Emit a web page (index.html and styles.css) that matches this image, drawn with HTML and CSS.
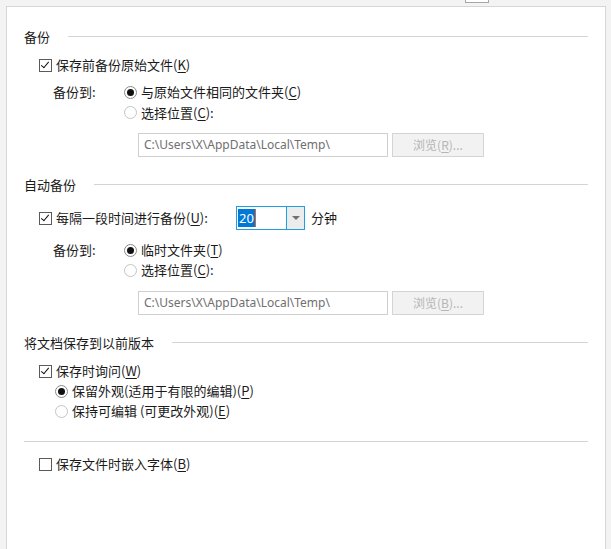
FILE: index.html
```html
<!DOCTYPE html>
<html lang="zh-CN">
<head>
<meta charset="utf-8">
<title>保存选项</title>
<link rel="stylesheet" href="styles.css">
</head>
<body>
<div class="topbar"><div class="tabstub"></div></div>
<div class="panel">
  <div class="group-title"><span>备份</span><div class="rule"></div></div>
  <div class="row cbrow gap8"><span class="cb checked"></span><span>保存前备份原始文件(<u>K</u>)</span></div>
  <div class="target gap7">
    <div class="tlabel">备份到:</div>
    <div class="opts">
      <div class="row"><span class="rb on"></span><span>与原始文件相同的文件夹(<u>C</u>)</span></div>
      <div class="row r21"><span class="rb"></span><span>选择位置(<u>C</u>):</span></div>
    </div>
  </div>
  <div class="pathrow gap10">
    <div class="path">C:\Users\X\AppData\Local\Temp\</div>
    <div class="browse">浏览(<u>R</u>)...</div>
  </div>

  <div class="group-title gap18"><span>自动备份</span><div class="rule"></div></div>
  <div class="row cbrow combo-row gap11">
    <span class="cb checked"></span><span class="cblabel">每隔一段时间进行备份(<u>U</u>):</span>
    <div class="combo"><div class="cval"><span class="sel">20</span><span class="caret"></span></div><div class="cbtn"><svg width="8" height="4" viewBox="0 0 8 4"><path d="M0 0H8L4 4Z" fill="#707070"/></svg></div></div>
    <span class="unit">分钟</span>
  </div>
  <div class="target gap10">
    <div class="tlabel">备份到:</div>
    <div class="opts">
      <div class="row"><span class="rb on"></span><span>临时文件夹(<u>T</u>)</span></div>
      <div class="row"><span class="rb"></span><span>选择位置(<u>C</u>):</span></div>
    </div>
  </div>
  <div class="pathrow gap11">
    <div class="path">C:\Users\X\AppData\Local\Temp\</div>
    <div class="browse">浏览(<u>B</u>)...</div>
  </div>

  <div class="group-title gap18"><span>将文档保存到以前版本</span><div class="rule"></div></div>
  <div class="row cbrow gap8"><span class="cb checked"></span><span>保存时询问(<u>W</u>)</span></div>
  <div class="row sub"><span class="rb on"></span><span>保留外观(适用于有限的编辑)(<u>P</u>)</span></div>
  <div class="row sub"><span class="rb"></span><span>保持可编辑 (可更改外观)(<u>E</u>)</span></div>
  <div class="sep"></div>
  <div class="row cbrow gap12"><span class="cb"></span><span>保存文件时嵌入字体(<u>B</u>)</span></div>
</div>
</body>
</html>
```
FILE: styles.css
```css
html, body {
  margin: 0;
  padding: 0;
  background: #f3f3f3;
  height: 549px;
  overflow: hidden;
}
body {
  padding-left: 6px;
  box-sizing: border-box;
  font-family: "Noto Sans CJK SC", "Noto Sans", sans-serif;
  font-size: 13px;
  color: #1a1a1a;
}
u { text-decoration: underline; text-underline-offset: 2px; }
.topbar { height: 6px; }
.tabstub {
  margin-left: 459px;
  width: 22px;
  height: 2px;
  border: 1px solid #a6a6a6;
  border-top: none;
  background: #ffffff;
}
.panel {
  box-sizing: content-box;
  width: 564px;
  height: 522px;
  background: #ffffff;
  border: 1px solid #d6d6d6;
  border-bottom: none;
  padding: 20px 17px 0 17px;
}
.group-title {
  display: flex;
  align-items: center;
  height: 20px;
  line-height: 20px;
}
.rule {
  flex: 1;
  height: 1px;
  background: #d4d4d4;
  margin-left: 18px;
  margin-top: -1px;
}
.row {
  display: flex;
  align-items: center;
  height: 20px;
  line-height: 20px;
  white-space: nowrap;
}
.r21 { height: 21px; }
.gap7 { margin-top: 7px; }
.gap8 { margin-top: 8px; }
.gap10 { margin-top: 10px; }
.gap11 { margin-top: 11px; }
.gap12 { margin-top: 12px; }
.gap18 { margin-top: 18px; }
.cbrow { padding-left: 15px; }
.cb {
  width: 11px;
  height: 11px;
  border: 1px solid #5a5a5a;
  margin-right: 4px;
  position: relative;
  flex: none;
  background: #fff;
}
.cb.checked::after {
  content: "";
  position: absolute;
  left: 3px;
  top: 0px;
  width: 3px;
  height: 7px;
  border-right: 1.6px solid #111;
  border-bottom: 1.6px solid #111;
  transform: rotate(40deg);
}
.rb {
  width: 11px;
  height: 11px;
  border: 1px solid #c4c4c4;
  border-radius: 50%;
  margin-right: 4px;
  flex: none;
  position: relative;
  background: #fff;
}
.rb.on { border-color: #8a8a8a; }
.rb.on::after {
  content: "";
  position: absolute;
  left: 2px;
  top: 2px;
  width: 7px;
  height: 7px;
  border-radius: 50%;
  background: #111;
}
.target { display: flex; padding-left: 29px; }
.tlabel { width: 71px; height: 20px; line-height: 20px; }
.opts { display: flex; flex-direction: column; }
.pathrow { display: flex; padding-left: 114px; gap: 4px; }
.path {
  width: 243px;
  height: 22px;
  border: 1px solid #cfcfcf;
  padding-left: 5px;
  line-height: 22px;
  font-family: "Noto Sans", "Open Sans", sans-serif;
  color: #707070;
  font-size: 12px;
}
.browse {
  width: 90px;
  height: 22px;
  border: 1px solid #d4d4d4;
  background: #f2f2f2;
  color: #b5b5b5;
  text-align: center;
  line-height: 22px;
  font-size: 12px;
}
.combo-row { height: 24px; }
.cblabel { width: 180px; }
.combo {
  display: flex;
  width: 67px;
  height: 22px;
  border: 1px solid #1f9fe3;
  background: #fff;
}
.cval {
  flex: 1;
  display: flex;
  align-items: center;
  padding-left: 1px;
  font-family: "Noto Sans", sans-serif;
}
.sel {
  background: #0078d7;
  color: #fff;
  line-height: 18px;
  padding: 0 1px;
}
.caret { width: 1px; height: 18px; background: #e2661b; }
.cbtn {
  width: 17px;
  border-left: 1px solid #1f9fe3;
  background: #ececec;
  display: flex;
  align-items: center;
  justify-content: center;
}
.unit { margin-left: 6px; }
.sub { padding-left: 31px; }
.sep { height: 1px; background: #d4d4d4; margin-top: 20px; }
```
